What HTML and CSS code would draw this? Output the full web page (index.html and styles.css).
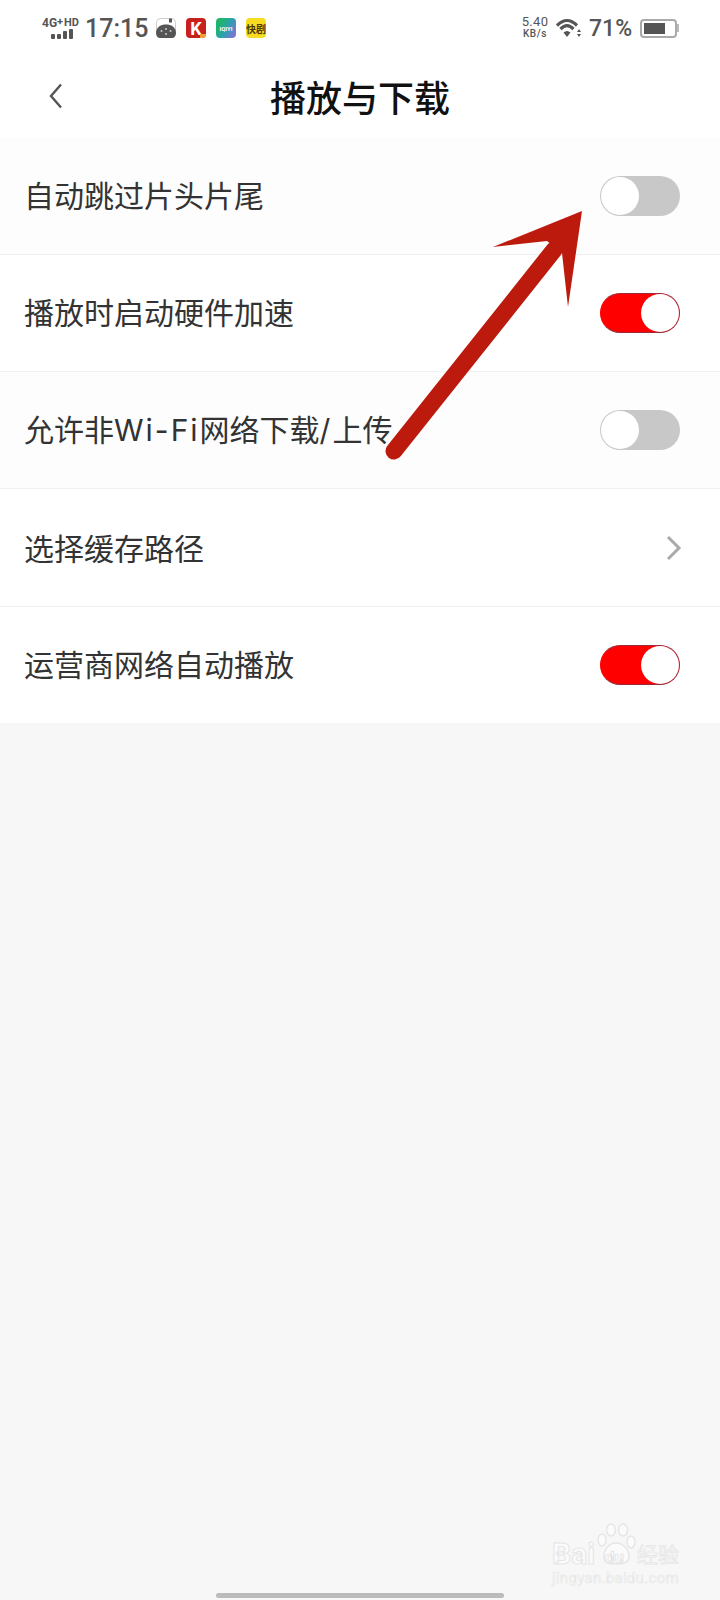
FILE: index.html
```html
<!DOCTYPE html>
<html lang="zh-CN">
<head>
    <meta charset="UTF-8">
    <meta name="viewport" content="width=device-width, initial-scale=1.0">
    <title>播放与下载</title>
    <link rel="stylesheet" href="styles.css">
</head>
<body>
    <div class="phone">
        <div class="status-bar">
            <div class="status-left">
                <div class="signal">
                    <div class="net">4G<sup>+</sup><span class="hd">HD</span></div>
                    <div class="bars"><i class="b1"></i><i class="b2"></i><i class="b3"></i><i class="b4"></i></div>
                </div>
                <span class="clock">17:15</span>
                <svg class="app-icon" viewBox="0 0 20 20">
                    <rect x="0.5" y="0.5" width="19" height="19" rx="4" fill="#fff" stroke="#ccc"/>
                    <path d="M0 15 C0 9 5 6.500 10 6.500 C15 6.500 20 9 20 15 C20 18 18 20 16 20 H4 C2 20 0 18 0 15Z" fill="#555"/>
                    <rect x="13" y="0.500" width="3" height="4" fill="#555"/>
                    <circle cx="5.500" cy="13" r="1" fill="#ccc"/><circle cx="10" cy="11" r="1" fill="#ccc"/>
                    <circle cx="14.500" cy="13" r="1" fill="#ccc"/><circle cx="10" cy="16" r="1" fill="#ccc"/>
                </svg>
                <div class="app-badge badge-k">K</div>
                <div class="app-badge badge-iqiyi">IQIYI</div>
                <div class="app-badge badge-kuai">快剧</div>
            </div>
            <div class="status-right">
                <div class="speed"><span>5.40</span><span class="unit">KB/s</span></div>
                <svg class="wifi" width="26" height="20" viewBox="0 0 26 20">
                    <path d="M1 7.500 Q11 -2.500 21 7.500" fill="none" stroke="#555" stroke-width="3.200"/>
                    <path d="M4.500 11 Q11 4.500 17.500 11" fill="none" stroke="#555" stroke-width="3.200"/>
                    <path d="M7.500 14.500 Q11 11.500 14.500 14.500 L11 19Z" fill="#555"/>
                    <path d="M21 14 L25 14 L23 11Z M21 16 L25 16 L23 19Z" fill="#555"/>
                </svg>
                <span class="percent">71%</span>
                <div class="battery"><div class="battery-fill"></div></div>
                <div class="battery-cap"></div>
            </div>
        </div>

        <div class="nav-bar">
            <svg class="back" width="14" height="26" viewBox="0 0 14 26">
                <path d="M12 1.500 L2 13 L12 24.500" fill="none" stroke="#555" stroke-width="2.400"/>
            </svg>
            <h1>播放与下载</h1>
        </div>

        <ul class="settings">
            <li class="row tinted">
                <span class="label">自动跳过片头片尾</span>
                <div class="switch"><div class="knob"></div></div>
            </li>
            <li class="row">
                <span class="label">播放时启动硬件加速</span>
                <div class="switch on"><div class="knob"></div></div>
            </li>
            <li class="row tinted">
                <span class="label">允许非<span class="latin">Wi-Fi</span>网络下载<span class="latin">/</span>上传</span>
                <div class="switch"><div class="knob"></div></div>
            </li>
            <li class="row tall">
                <span class="label">选择缓存路径</span>
                <svg class="chevron" width="16" height="26" viewBox="0 0 16 26">
                    <path d="M2 2 L13 13 L2 24" fill="none" stroke="#aaa" stroke-width="3"/>
                </svg>
            </li>
            <li class="row last">
                <span class="label">运营商网络自动播放</span>
                <div class="switch on"><div class="knob"></div></div>
            </li>
        </ul>

        <!-- annotation arrow drawn over the screenshot -->
        <svg class="arrow" width="720" height="480" viewBox="0 0 720 480">
            <path d="M394 451 L554 250" fill="none" stroke="#bb1a0d" stroke-width="17" stroke-linecap="round"/>
            <path d="M582 211 L493 247 L547 241 L562 253 L568 307Z" fill="#bb1a0d"/>
        </svg>

        <div class="watermark">
            <svg class="paw" width="40" height="42" viewBox="0 0 40 42">
                <g fill="#fbfbfb" stroke="#e6e6e6" stroke-width="1.500">
                    <ellipse cx="6" cy="17" rx="4" ry="6"/>
                    <ellipse cx="15" cy="7" rx="4.500" ry="6"/>
                    <ellipse cx="27" cy="7" rx="4.500" ry="6"/>
                    <ellipse cx="35" cy="19" rx="4" ry="6"/>
                    <path d="M8 34 C8 25 14 20 20 20 C27 20 33 26 33 34 C33 40 27 41 20 41 C13 41 8 40 8 34Z"/>
                </g>
            </svg>
            <div class="wm-title"><span class="wm-bai">Bai</span><span class="wm-du">du</span><span class="wm-cn">经验</span></div>
            <div class="wm-url">jingyan.baidu.com</div>
        </div>

        <div class="home-bar"></div>
    </div>
</body>
</html>
```

FILE: styles.css
```css
* {
    box-sizing: border-box;
}

body {
    margin: 0;
    background-color: #f7f7f7;
    font-family: Roboto, "Noto Sans CJK SC", sans-serif;
    color: #333;
}

.phone {
    position: relative;
    width: 720px;
    height: 1600px;
    overflow: hidden;
    background-color: #f7f7f7;
}

/* status bar */
.status-bar {
    height: 60px;
    padding: 14px 41px 0 42px;
    display: flex;
    justify-content: space-between;
    align-items: flex-start;
    background-color: #fff;
    color: #555;
}

.status-left,
.status-right {
    display: flex;
    align-items: center;
    height: 28px;
}

.signal {
    width: 36px;
    margin-right: 7px;
}

.net {
    font-size: 12px;
    font-weight: 700;
    line-height: 12px;
    white-space: nowrap;
}

.net sup {
    font-size: 11px;
    line-height: 0;
    vertical-align: 2px;
}

.net .hd {
    font-size: 11px;
    vertical-align: 1px;
    margin-left: 1px;
}

.bars {
    display: flex;
    justify-content: flex-end;
    align-items: flex-end;
    gap: 2px;
    height: 10px;
    margin-right: 5px;
}

.bars i {
    display: block;
    width: 4px;
    background-color: #555;
    border-radius: 1px;
}

.bars .b1 { height: 5px; }
.bars .b2 { height: 5px; }
.bars .b3 { height: 8px; }
.bars .b4 { height: 10px; }

.clock {
    font-size: 25px;
    font-weight: 500;
    width: 71px;
}

.app-icon,
.app-badge {
    width: 20px;
    height: 20px;
    margin-right: 10px;
    flex-shrink: 0;
}

.app-badge {
    position: relative;
    border-radius: 4px;
    display: flex;
    justify-content: center;
    align-items: center;
    overflow: hidden;
}

.badge-k {
    background-color: #c8201c;
    color: #fff;
    font-size: 18px;
    font-weight: 700;
}

.badge-k::after {
    content: "";
    position: absolute;
    right: 0;
    bottom: 0;
    width: 6px;
    height: 4px;
    background-color: #f0a030;
}

.badge-iqiyi {
    background: linear-gradient(120deg, #1fb56c 20%, #2e9fb0 55%, #9a66e0 100%);
    color: #fff;
    font-size: 6px;
    font-weight: 700;
}

.badge-kuai {
    background-color: #f8dc22;
    color: #4a3a10;
    font-size: 10px;
    font-weight: 700;
    white-space: nowrap;
}

.speed {
    display: flex;
    flex-direction: column;
    align-items: center;
    width: 26px;
    margin-right: 8px;
    font-size: 13px;
    line-height: 12px;
    letter-spacing: 0.3px;
}

.speed .unit {
    font-size: 10px;
    font-weight: 500;
    letter-spacing: 0.6px;
}

.wifi {
    margin-right: 7px;
}

.percent {
    font-size: 23px;
    font-weight: 500;
    width: 51px;
}

.battery {
    width: 37px;
    height: 19px;
    padding: 2px;
    border: 2px solid #aaa;
    border-radius: 4px;
}

.battery-fill {
    width: 72%;
    height: 100%;
    background-color: #555;
}

.battery-cap {
    width: 2px;
    height: 8px;
    background-color: #bbb;
}

/* title row */
.nav-bar {
    position: relative;
    height: 78px;
    display: flex;
    justify-content: center;
    align-items: center;
    background-color: #fff;
}

.nav-bar h1 {
    margin: 0;
    padding-bottom: 6px;
    font-size: 36px;
    font-weight: 500;
    color: #111;
}

.back {
    position: absolute;
    left: 49px;
    top: 23px;
}

/* list */
.settings {
    list-style: none;
    margin: 0;
    padding: 0;
}

.row {
    height: 117px;
    padding: 0 40px 0 24px;
    display: flex;
    justify-content: space-between;
    align-items: center;
    font-size: 30px;
    background-color: #fff;
    border-bottom: 1px solid #f0f0f0;
}

.row.tinted {
    background-color: #fdfdfd;
}

.row.tall {
    height: 118px;
}

.row.tall .label {
    margin-bottom: 1px;
}

.row.last {
    height: 116px;
    border-bottom: none;
}

.label {
    margin-bottom: 4px;
}

.latin {
    font-family: Inter, sans-serif;
    letter-spacing: 2px;
}

.switch {
    width: 80px;
    height: 40px;
    padding: 1px;
    border-radius: 20px;
    background-color: #c8c8c8;
    display: flex;
}

.knob {
    width: 38px;
    height: 38px;
    border-radius: 50%;
    background-color: #fff;
}

.switch.on {
    background-color: #ff0000;
    justify-content: flex-end;
    border: 1px solid #9c2a36;
    border-left-color: #ff0000;
    padding: 0;
}

.chevron {
    margin-right: -2px;
}

/* overlays */
.arrow {
    position: absolute;
    left: 0;
    top: 0;
}

.watermark {
    position: absolute;
    left: 552px;
    top: 1520px;
    width: 130px;
    height: 48px;
    color: #fbfbfb;
}

.paw {
    position: absolute;
    left: 44px;
    top: 3px;
}

.wm-title {
    position: absolute;
    left: 0;
    top: 15px;
    display: flex;
    align-items: center;
    height: 36px;
    font-weight: 700;
    white-space: nowrap;
    -webkit-text-stroke: 1px #e6e6e6;
}

.wm-bai {
    font-size: 30px;
    width: 53px;
}

.wm-du {
    font-size: 17px;
    width: 32px;
    padding-top: 8px;
    -webkit-text-stroke: 0.7px #e0e0e0;
}

.wm-cn {
    font-size: 21px;
    font-weight: 400;
    white-space: nowrap;
    -webkit-text-stroke: 0.8px #e6e6e6;
}

.wm-url {
    position: absolute;
    left: 0;
    top: 49px;
    width: 130px;
    font-size: 15px;
    letter-spacing: 0.3px;
    white-space: nowrap;
    color: #f6f6f6;
    -webkit-text-stroke: 0.5px #e6e6e6;
}

.home-bar {
    position: absolute;
    left: 216px;
    top: 1593px;
    width: 288px;
    height: 5px;
    border-radius: 3px;
    background-color: #bbb;
}
```
